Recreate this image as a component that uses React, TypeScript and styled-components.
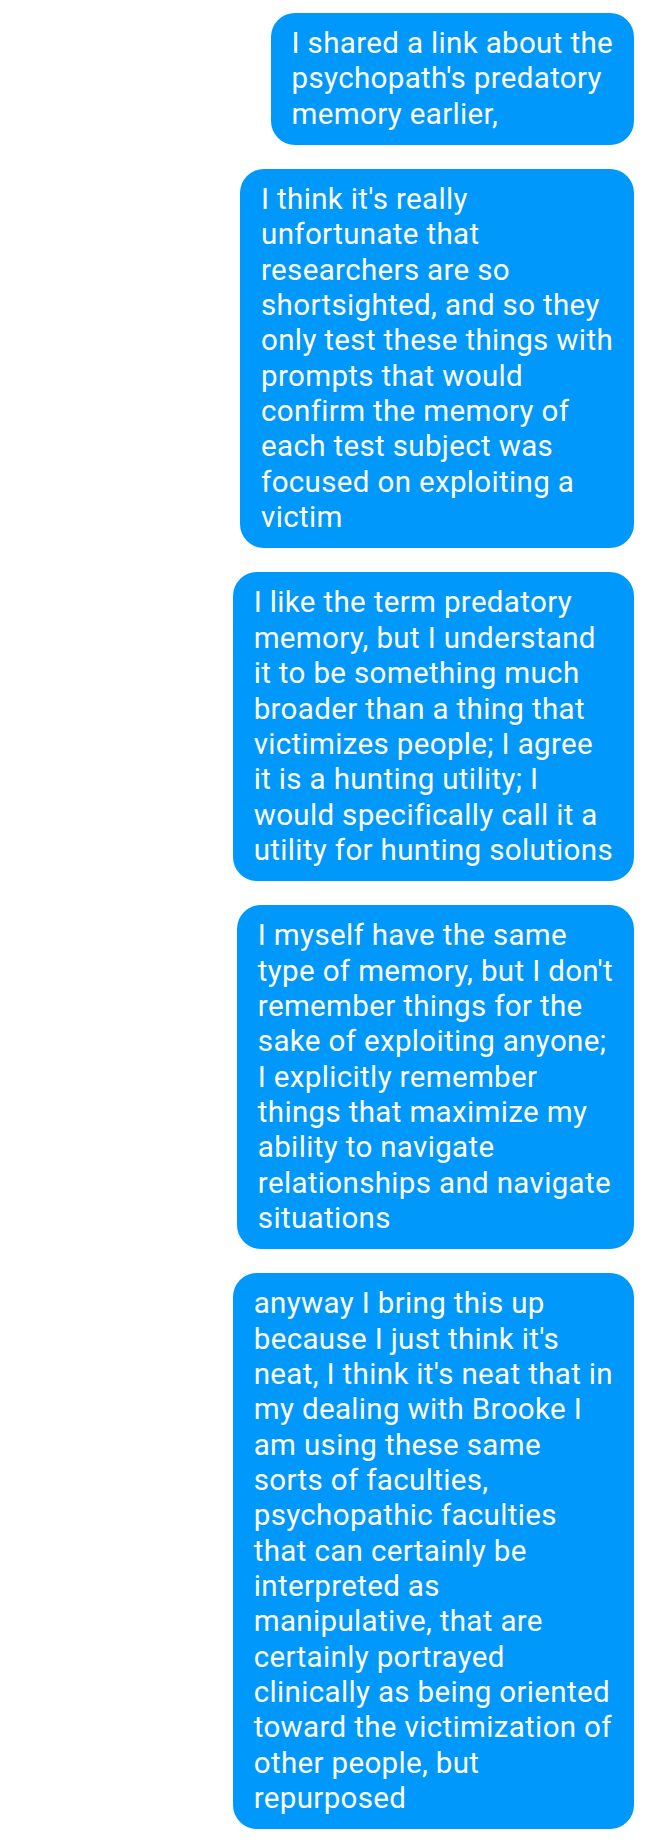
import React from "react";
import styled, { createGlobalStyle } from "styled-components";

const GlobalStyle = createGlobalStyle`
  html, body {
    margin: 0;
    padding: 0;
    background: #ffffff;
  }
  body {
    font-family: Roboto, "Noto Sans", "Liberation Sans", sans-serif;
  }
`;

const Thread = styled.div`
  display: flex;
  flex-direction: column;
  align-items: flex-end;
  gap: 24px;
  padding: 13px 14px 18px 14px;
`;

const Bubble = styled.div`
  background: #0098fb;
  color: #ffffff;
  border-radius: 24px;
  padding: 13px 21px;
  font-size: 29.5px;
  line-height: 35.35px;
  letter-spacing: 0.35px;
  > span {
    display: block;
    white-space: nowrap;
  }
`;

const messages: string[][] = [
  ["I shared a link about the", "psychopath's predatory", "memory earlier,"],
  [
    "I think it's really",
    "unfortunate that",
    "researchers are so",
    "shortsighted, and so they",
    "only test these things with",
    "prompts that would",
    "confirm the memory of",
    "each test subject was",
    "focused on exploiting a",
    "victim",
  ],
  [
    "I like the term predatory",
    "memory, but I understand",
    "it to be something much",
    "broader than a thing that",
    "victimizes people; I agree",
    "it is a hunting utility; I",
    "would specifically call it a",
    "utility for hunting solutions",
  ],
  [
    "I myself have the same",
    "type of memory, but I don't",
    "remember things for the",
    "sake of exploiting anyone;",
    "I explicitly remember",
    "things that maximize my",
    "ability to navigate",
    "relationships and navigate",
    "situations",
  ],
  [
    "anyway I bring this up",
    "because I just think it's",
    "neat, I think it's neat that in",
    "my dealing with Brooke I",
    "am using these same",
    "sorts of faculties,",
    "psychopathic faculties",
    "that can certainly be",
    "interpreted as",
    "manipulative, that are",
    "certainly portrayed",
    "clinically as being oriented",
    "toward the victimization of",
    "other people, but",
    "repurposed",
  ],
];

function App() {
  return (
    <>
      <GlobalStyle />
      <Thread>
        {messages.map((lines, i) => (
          <Bubble key={i}>
            {lines.map((line) => (
              <span key={line}>{line}</span>
            ))}
          </Bubble>
        ))}
      </Thread>
    </>
  );
}

export default App;
